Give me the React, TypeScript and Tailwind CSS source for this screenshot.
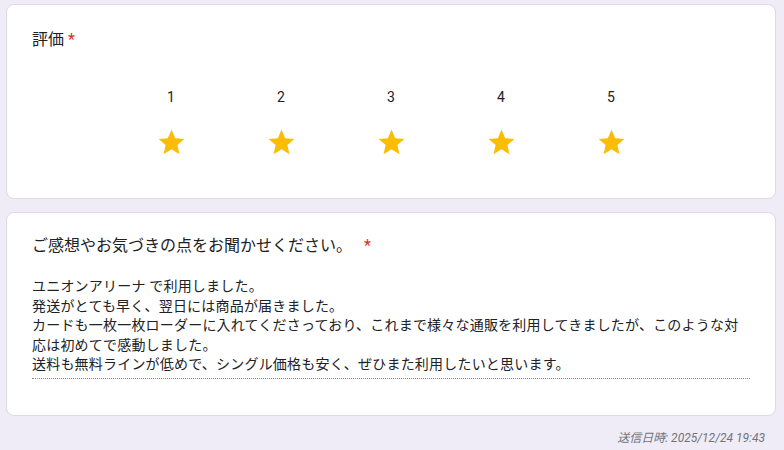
const Star = () => (
  <svg width="31" height="31" viewBox="0 0 24 24" className="fill-[#fbbc04]">
    <path d="M12 17.27L18.18 21l-1.64-7.03L22 9.24l-7.19-.61L12 2 9.19 8.63 2 9.24l5.46 4.73L5.82 21z" />
  </svg>
);

const comment = [
  'ユニオンアリーナ で利用しました。',
  '発送がとても早く、翌日には商品が届きました。',
  'カードも一枚一枚ローダーに入れてくださっており、これまで様々な通販を利用してきましたが、このような対応は初めてで感動しました。',
  '送料も無料ラインが低めで、シングル価格も安く、ぜひまた利用したいと思います。',
];

export default function App() {
  return (
    <div className="min-h-screen bg-[#efebf7] pt-1 font-['Roboto','Noto_Sans_CJK_JP',sans-serif] text-[#202124]">
      <div className="mx-[6px] w-[770px] rounded-lg border border-[#dadce0] bg-white pt-[23px] pl-[25px] pb-[40px]">
        <div className="text-base leading-6">
          評価<span className="ml-1 text-[#d93025]">*</span>
        </div>
        <div className="mt-[35px] -ml-[25px] flex justify-center">
          {[1, 2, 3, 4, 5].map(n => (
            <div key={n} className="flex w-[110px] flex-col items-center">
              <span className="text-sm leading-5">{n}</span>
              <div className="mt-[20px]">
                <Star />
              </div>
            </div>
          ))}
        </div>
      </div>

      <div className="mx-[6px] mt-[13px] w-[770px] rounded-lg border border-[#dadce0] bg-white pt-[21px] pl-[25px] pr-[25px] pb-[36px]">
        <div className="text-base leading-6">
          ご感想やお気づきの点をお聞かせください。
          <span className="ml-3 text-[#d93025]">*</span>
        </div>
        <div className="mt-[19px] border-b border-dotted border-[#8a8a8a] pb-[3px] text-sm leading-[19.5px] tracking-[0.2px]">
          {comment.map((line, i) => (
            <p key={i}>{line}</p>
          ))}
        </div>
      </div>

      <div className="mt-[14px] pr-[19px] text-right text-xs italic text-[#70757a]">
        送信日時: 2025/12/24 19:43
      </div>
    </div>
  );
}
